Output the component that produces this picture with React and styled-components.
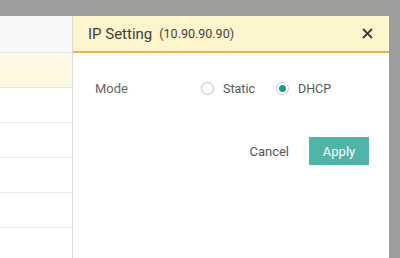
import React, { useState } from "react";
import styled, { createGlobalStyle } from "styled-components";

const GlobalStyle = createGlobalStyle`
  html, body {
    margin: 0;
    padding: 0;
    width: 400px;
    height: 258px;
    overflow: hidden;
    font-family: Roboto, "Liberation Sans", Arial, sans-serif;
    background: #ffffff;
  }
`;

const Screen = styled.div`
  width: 400px;
  height: 258px;
  display: flex;
  flex-direction: column;
  background: #9e9e9e;
`;

const TopShade = styled.div`
  height: 16px;
  flex: none;
  background: #9d9d9d;
`;

const Body = styled.div`
  flex: 1;
  display: flex;
`;

const Table = styled.div`
  width: 72px;
  flex: none;
  background: #ffffff;
  display: flex;
  flex-direction: column;
`;

const Row = styled.div`
  height: ${(p) => (p.head ? "36px" : "34px")};
  flex: none;
  background: ${(p) => (p.highlight ? "#fdf8e2" : p.head ? "#f8f8fa" : "#ffffff")};
  border-bottom: 1px solid #e6e6e6;
`;

const Panel = styled.div`
  width: 316px;
  flex: none;
  background: #ffffff;
  border-left: 1px solid #dcdcdc;
  display: flex;
  flex-direction: column;
`;

const Header = styled.div`
  height: 35px;
  flex: none;
  background: #fdf5cb;
  border-bottom: 2px solid #efaf4e;
  display: flex;
  align-items: center;
  padding: 0 15px 0 15px;
  color: #3f3f3f;
`;

const Title = styled.span`
  font-size: 15px;
`;

const Address = styled.span`
  font-size: 12.5px;
  margin-left: 7px;
  color: #444;
`;

const Close = styled.button`
  margin-left: auto;
  width: 14px;
  height: 14px;
  padding: 0;
  border: none;
  background: none;
  display: flex;
  align-items: center;
  justify-content: center;
  cursor: pointer;
`;

const Content = styled.div`
  padding: 25px 20px 0 22px;
  display: flex;
  flex-direction: column;
`;

const Field = styled.div`
  display: flex;
  align-items: center;
  height: 20px;
`;

const Label = styled.span`
  width: 106px;
  font-size: 13px;
  color: #666666;
`;

const RadioGroup = styled.div`
  display: flex;
  align-items: center;
  gap: 21px;
`;

const Option = styled.label`
  display: flex;
  align-items: center;
  font-size: 12.5px;
  color: #555555;
  cursor: pointer;
`;

const Circle = styled.span`
  width: 11px;
  height: 11px;
  border-radius: 50%;
  border: 1px solid ${(p) => (p.checked ? "#c8c8c8" : "#bdbdbd")};
  background: #ffffff;
  margin-right: 9px;
  display: flex;
  align-items: center;
  justify-content: center;
  &::after {
    content: "";
    width: 7px;
    height: 7px;
    border-radius: 50%;
    background: ${(p) => (p.checked ? "#1f9a88" : "transparent")};
  }
`;

const Actions = styled.div`
  display: flex;
  justify-content: flex-end;
  align-items: center;
  gap: 20px;
  margin-top: 39px;
`;

const CancelButton = styled.button`
  border: none;
  background: none;
  padding: 0;
  font-family: inherit;
  font-size: 13px;
  color: #555555;
  cursor: pointer;
`;

const ApplyButton = styled.button`
  width: 60px;
  height: 28px;
  border: none;
  background: #4fb5a8;
  color: #ffffff;
  font-family: inherit;
  font-size: 13px;
  cursor: pointer;
`;

const SideShade = styled.div`
  flex: 1;
  background: #9e9e9e;
`;

function RadioOption({ label, checked, onSelect }) {
  return (
    <Option onClick={onSelect}>
      <Circle checked={checked} />
      {label}
    </Option>
  );
}

export default function App() {
  const [mode, setMode] = useState("DHCP");

  return (
    <>
      <GlobalStyle />
      <Screen>
        <TopShade />
        <Body>
          <Table>
            <Row head />
            <Row highlight />
            <Row />
            <Row />
            <Row />
            <Row />
          </Table>

          <Panel>
            <Header>
              <Title>IP Setting</Title>
              <Address>(10.90.90.90)</Address>
              <Close aria-label="close">
                <svg width="11" height="11" viewBox="0 0 11 11">
                  <path d="M1 1L10 10M10 1L1 10" stroke="#3a3a3a" strokeWidth="1.8" />
                </svg>
              </Close>
            </Header>

            <Content>
              <Field>
                <Label>Mode</Label>
                <RadioGroup>
                  <RadioOption label="Static" checked={mode === "Static"} onSelect={() => setMode("Static")} />
                  <RadioOption label="DHCP" checked={mode === "DHCP"} onSelect={() => setMode("DHCP")} />
                </RadioGroup>
              </Field>

              <Actions>
                <CancelButton>Cancel</CancelButton>
                <ApplyButton>Apply</ApplyButton>
              </Actions>
            </Content>
          </Panel>

          <SideShade />
        </Body>
      </Screen>
    </>
  );
}
